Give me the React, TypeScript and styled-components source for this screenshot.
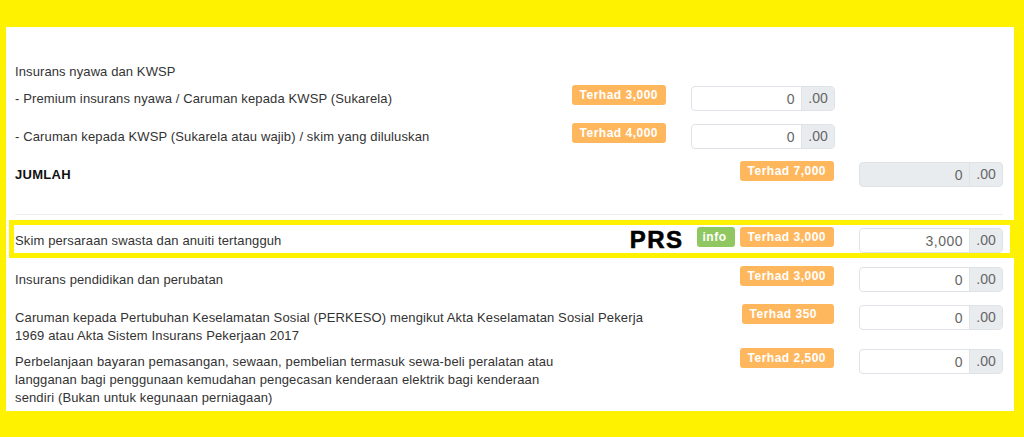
import * as React from "react";
import styled, { createGlobalStyle } from "styled-components";

const GlobalStyle = createGlobalStyle`
  html, body {
    margin: 0;
    padding: 0;
    background: #fff200;
    font-family: "Liberation Sans", Arial, sans-serif;
  }
  #root {
    padding: 27px 10px 26px 6px;
  }
`;

const Panel = styled.div`
  background: #fff;
  padding: 32px 11px 0 9px;
`;

const Heading = styled.div`
  font-size: 13px;
  line-height: 18px;
  letter-spacing: 0.1px;
  color: #333;
  padding: 4px 0;
  min-height: 19px;
`;

const Row = styled.div<{ $shift?: boolean; $minH?: number; $marked?: boolean }>`
  display: grid;
  grid-template-columns: 1fr auto 144px;
  column-gap: 25px;
  align-items: start;
  min-height: ${(p) => p.$minH ?? 38}px;
  padding-right: ${(p) => (p.$shift ? "168px" : "0")};
  position: relative;

  ${(p) =>
    p.$marked &&
    `
    &::after {
      content: "";
      position: absolute;
      top: -8px;
      left: -6px;
      right: -12px;
      height: 28px;
      border: 5px solid #fff200;
      pointer-events: none;
    }
  `}
`;

const Label = styled.div<{ $bold?: boolean }>`
  font-size: 13px;
  line-height: 18px;
  letter-spacing: ${(p) => (p.$bold ? "0.3px" : "0.13px")};
  color: ${(p) => (p.$bold ? "#111" : "#333")};
  font-weight: ${(p) => (p.$bold ? 700 : 400)};
  padding: 4px 0;
`;

const Tags = styled.div`
  display: flex;
  justify-content: flex-end;
  align-items: flex-start;
  gap: 5px;
  margin-top: -1px;
`;

const Badge = styled.span<{ $tone?: "warn" | "ok"; $padR?: number }>`
  display: inline-block;
  height: 20px;
  line-height: 20px;
  padding: 0 ${(p) => p.$padR ?? 8}px 0 ${(p) => (p.$tone === "ok" ? 6 : 8)}px;
  border-radius: 3px;
  background: ${(p) => (p.$tone === "ok" ? "#91c761" : "#ffb75e")};
  color: #fff;
  font-size: 12px;
  font-weight: 700;
  letter-spacing: 0.5px;
  white-space: nowrap;
`;

const Prs = styled.span`
  font-size: 24px;
  line-height: 20px;
  font-weight: 700;
  letter-spacing: 1.5px;
  color: #000;
  margin: 3px 8px 0 0;
  -webkit-text-stroke: 0.6px #000;
`;

const Field = styled.div<{ $disabled?: boolean }>`
  display: flex;
  height: 25px;
  box-sizing: border-box;
  border: 1px solid #dfe2e6;
  border-radius: 4px;
  overflow: hidden;
  background: ${(p) => (p.$disabled ? "#e9ecef" : "#fff")};
`;

const Amount = styled.input`
  flex: 1;
  min-width: 0;
  border: none;
  outline: none;
  background: transparent;
  text-align: right;
  padding: 0 6px;
  font-family: "Liberation Sans", Arial, sans-serif;
  font-size: 14px;
  letter-spacing: 0.5px;
  color: #666;
  &:disabled {
    color: #666;
  }
`;

const Cents = styled.span`
  width: 32px;
  border-left: 1px solid #dfe2e6;
  background: #e9ecef;
  text-align: center;
  line-height: 23px;
  font-size: 14px;
  color: #666;
`;

const Divider = styled.hr`
  border: none;
  border-top: 1px solid #eceef0;
  margin: 14px 0 13px;
`;

type MoneyProps = { value: string; disabled?: boolean };

const Money = ({ value, disabled }: MoneyProps) => (
  <Field $disabled={disabled}>
    <Amount readOnly value={value} disabled={disabled} />
    <Cents>.00</Cents>
  </Field>
);

export default function App() {
  return (
    <>
      <GlobalStyle />
      <Panel>
        <Heading>Insurans nyawa dan KWSP</Heading>

        <Row $shift>
          <Label>- Premium insurans nyawa / Caruman kepada KWSP (Sukarela)</Label>
          <Tags>
            <Badge>Terhad 3,000</Badge>
          </Tags>
          <Money value="0" />
        </Row>

        <Row $shift>
          <Label>- Caruman kepada KWSP (Sukarela atau wajib) / skim yang diluluskan</Label>
          <Tags>
            <Badge>Terhad 4,000</Badge>
          </Tags>
          <Money value="0" />
        </Row>

        <Row>
          <Label $bold>JUMLAH</Label>
          <Tags>
            <Badge>Terhad 7,000</Badge>
          </Tags>
          <Money value="0" disabled />
        </Row>

        <Divider />

        <Row $marked $minH={39}>
          <Label>Skim persaraan swasta dan anuiti tertangguh</Label>
          <Tags>
            <Prs>PRS</Prs>
            <Badge $tone="ok">info</Badge>
            <Badge>Terhad 3,000</Badge>
          </Tags>
          <Money value="3,000" />
        </Row>

        <Row>
          <Label>Insurans pendidikan dan perubatan</Label>
          <Tags>
            <Badge>Terhad 3,000</Badge>
          </Tags>
          <Money value="0" />
        </Row>

        <Row>
          <Label>
            Caruman kepada Pertubuhan Keselamatan Sosial (PERKESO) mengikut Akta Keselamatan Sosial Pekerja
            <br />
            1969 atau Akta Sistem Insurans Pekerjaan 2017
          </Label>
          <Tags>
            <Badge $padR={17}>Terhad 350</Badge>
          </Tags>
          <Money value="0" />
        </Row>

        <Row>
          <Label>
            Perbelanjaan bayaran pemasangan, sewaan, pembelian termasuk sewa-beli peralatan atau
            <br />
            langganan bagi penggunaan kemudahan pengecasan kenderaan elektrik bagi kenderaan
            <br />
            sendiri (Bukan untuk kegunaan perniagaan)
          </Label>
          <Tags>
            <Badge>Terhad 2,500</Badge>
          </Tags>
          <Money value="0" />
        </Row>
      </Panel>
    </>
  );
}
